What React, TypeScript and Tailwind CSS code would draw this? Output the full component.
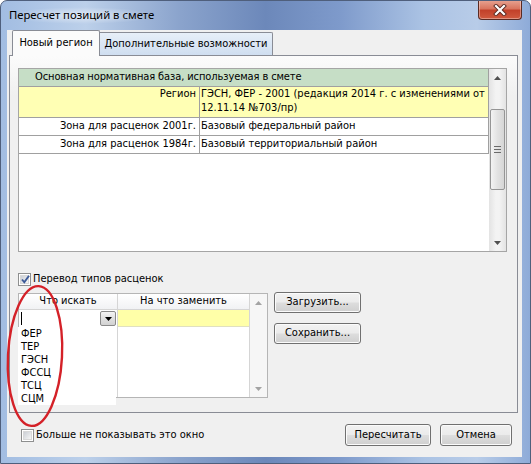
import React from "react";

const UP_ROWS = [
  { label: "Зона для расценок 2001г.", value: "Базовый федеральный район" },
  { label: "Зона для расценок 1984г.", value: "Базовый территориальный район" },
];

const LIST_ITEMS = ["ФЕР", "ТЕР", "ГЭСН", "ФССЦ", "ТСЦ", "СЦМ"];

const Arrow = ({ dir, color }: { dir: "up" | "down"; color: string }) => (
  <svg width="7" height="4" viewBox="0 0 7 4">
    <polygon points={dir === "up" ? "0,4 3.5,0 7,4" : "0,0 7,0 3.5,4"} fill={color} />
  </svg>
);

const Button = ({ label, className }: { label: string; className: string }) => (
  <button
    className={
      "flex items-center justify-center rounded-[3px] border border-[#707070] bg-[linear-gradient(to_bottom,#f2f2f2_0%,#ebebeb_48%,#dddddd_52%,#cfcfcf_100%)] shadow-[inset_0_0_0_1px_#fbfbfb] text-[11px] text-black " +
      className
    }
  >
    {label}
  </button>
);

const Checkbox = ({ checked }: { checked?: boolean }) => (
  <span className="relative flex h-[13px] w-[13px] shrink-0 items-center justify-center border border-[#8e8f8f] bg-white">
    <span className="h-[9px] w-[9px] border border-[#d8d8d8] bg-[linear-gradient(135deg,#cbcfd5,#f6f6f6)]" />
    {checked && (
      <svg className="absolute left-[1px] top-[0px]" width="11" height="11" viewBox="0 0 11 11">
        <path d="M2 5.5 L4.3 8.3 L9 1.8" stroke="#3b5998" strokeWidth="1.9" fill="none" />
      </svg>
    )}
  </span>
);

export default function App() {
  return (
    <div className="relative flex h-[464px] w-[531px] flex-col overflow-hidden rounded-t-[7px] border border-[#4f5f7c] bg-[linear-gradient(to_right,#a2bde2_0%,#bcd0ea_16%,#8aa3cc_34%,#6c88ba_50%,#7e9acb_64%,#abc3e4_80%,#b8cce8_90%,#8eabd8_100%)] pb-[6px] pl-[6px] pr-[8px] font-['DejaVu_Sans_Condensed','DejaVu_Sans',sans-serif] text-[11px] text-black">
      {/* Title bar */}
      <div className="flex h-[29px] items-start justify-between">
        <span className="ml-[1px] mt-[6px] rounded-full bg-[radial-gradient(ellipse_at_center,rgba(255,255,255,0.55),rgba(255,255,255,0)_70%)] px-[1px] font-['Noto_Sans',sans-serif] text-[11.3px] text-black">
          Пересчет позиций в смете
        </span>
        <div className="-mt-[1px] flex h-[20px] w-[44px] items-center justify-center rounded-b-[4px] border border-t-0 border-[#5a2a22] bg-[linear-gradient(to_bottom,#e8a493_0%,#d9755f_45%,#c2412a_55%,#d05a3f_100%)] shadow-[inset_0_0_0_1px_rgba(255,255,255,0.35)]">
          <svg width="14" height="12" viewBox="0 0 14 12">
            <path d="M3 2 L11 10 M11 2 L3 10" stroke="#5b2a22" strokeWidth="4" strokeLinecap="square" />
            <path d="M3 2 L11 10 M11 2 L3 10" stroke="#ffffff" strokeWidth="2.2" strokeLinecap="square" />
          </svg>
        </div>
      </div>

      {/* Client */}
      <div className="flex flex-1 flex-col bg-[#f0f0f0]">
        {/* Tabs */}
        <div className="flex h-[25px] items-end pl-[5px]">
          <div className="relative z-10 -mb-[1px] flex h-[26px] w-[88px] items-center justify-center rounded-t-[2px] border border-b-0 border-[#898c95] bg-[#fbfbfb]">
            Новый регион
          </div>
          <div className="flex h-[23px] w-[173px] items-center justify-center rounded-tr-[2px] border-r border-t border-[#898c95] bg-[linear-gradient(to_bottom,#e7eff8,#cfdef0)]">
            Дополнительные возможности
          </div>
        </div>

        {/* Panel */}
        <div className="ml-[2px] flex h-[358px] w-[509px] flex-col border border-[#898c95] bg-[linear-gradient(to_bottom,#fbfbfb,#f0f0f0_40px)]">
          {/* Upper grid */}
          <div className="ml-[8px] mt-[12px] flex h-[184px] w-[489px] border border-[#a5a5a5] bg-white">
            <div className="flex w-[470px] flex-col">
              <div className="flex h-[18px] items-center border-b border-r border-[#a0a0a0] bg-[#c6dec6] pl-[16px] tracking-[-0.1px]">
                Основная нормативная база, используемая в смете
              </div>
              <div className="flex h-[31px] border-b border-[#a0a0a0] bg-[#ffffb4]">
                <div className="w-[181px] border-r border-[#a0a0a0] pr-[3px] text-right leading-[14px]">Регион</div>
                <div className="flex-1 border-r border-[#a0a0a0] pl-[1px] leading-[14px]">
                  ГЭСН, ФЕР - 2001 (редакция 2014 г. с изменениями от
                  <br />
                  12.11.14 №703/пр)
                </div>
              </div>
              {UP_ROWS.map((r) => (
                <div key={r.label} className="flex h-[18px] border-b border-[#a0a0a0]">
                  <div className="flex w-[181px] items-center justify-end border-r border-[#a0a0a0] pr-[3px]">{r.label}</div>
                  <div className="flex flex-1 items-center border-r border-[#a0a0a0] pl-[1px]">{r.value}</div>
                </div>
              ))}
            </div>
            {/* Scrollbar */}
            <div className="flex w-[17px] flex-col bg-[linear-gradient(to_right,#e3e3e3,#f3f3f3_40%,#f3f3f3_60%,#e3e3e3)]">
              <div className="flex h-[17px] items-center justify-center">
                <Arrow dir="up" color="#505050" />
              </div>
              <div className="h-[23px]" />
              <div className="mx-[1px] flex h-[81px] items-center justify-center rounded-[2px] border border-[#959595] bg-[linear-gradient(to_right,#f3f3f3,#e2e2e2_50%,#d6d6d6)]">
                <svg width="7" height="7" viewBox="0 0 7 7">
                  <path d="M0 0.5 H7 M0 3.5 H7 M0 6.5 H7" stroke="#6a6a6a" strokeWidth="1" />
                </svg>
              </div>
              <div className="flex-1" />
              <div className="flex h-[17px] items-center justify-center">
                <Arrow dir="down" color="#505050" />
              </div>
            </div>
          </div>

          {/* Checkbox */}
          <label className="ml-[8px] mt-[21px] flex h-[13px] items-center gap-[2px]">
            <Checkbox checked />
            <span>Перевод типов расценок</span>
          </label>

          {/* Lower section */}
          <div className="mt-[6px] flex items-start">
            <div className="relative ml-[8px] mt-[1px] flex h-[105px] w-[250px] border border-[#b5b5b5] bg-white">
              <div className="flex w-[99px] flex-col border-r border-[#d5d5d5]">
                <div className="flex h-[16px] items-center justify-center border-b border-[#d5d5d5] bg-[linear-gradient(to_bottom,#ffffff,#f1f2f4)]">
                  Что искать
                </div>
                <div className="flex h-[17px] items-center justify-between bg-white pl-[2px] pr-[1px]">
                  <span className="h-[13px] w-[1px] bg-black" />
                  <span className="flex h-[15px] w-[16px] items-center justify-center rounded-[2px] border border-[#8a8a8a] bg-[linear-gradient(to_bottom,#f4f4f4,#e0e0e0_50%,#d2d2d2)]">
                    <Arrow dir="down" color="#000000" />
                  </span>
                </div>
              </div>
              <div className="flex w-[132px] flex-col border-r border-[#d5d5d5]">
                <div className="flex h-[16px] items-center justify-center border-b border-[#d5d5d5] bg-[linear-gradient(to_bottom,#ffffff,#f1f2f4)]">
                  На что заменить
                </div>
                <div className="h-[17px] border-b border-[#e0e0c0] bg-[#ffffa8]" />
              </div>
              <div className="flex w-[17px] flex-col justify-between bg-[#f6f6f6]">
                <div className="flex h-[17px] items-center justify-center">
                  <Arrow dir="up" color="#a3a3a3" />
                </div>
                <div className="flex h-[17px] items-center justify-center">
                  <Arrow dir="down" color="#a3a3a3" />
                </div>
              </div>

              {/* Open dropdown list */}
              <div className="absolute left-[-1px] top-[33px] flex h-[78px] w-[98px] flex-col bg-white pl-[3px] leading-[13px]">
                {LIST_ITEMS.map((it) => (
                  <span key={it}>{it}</span>
                ))}
              </div>
            </div>

            <div className="ml-[6px] flex flex-col gap-[10px]">
              <Button label="Загрузить..." className="h-[21px] w-[87px]" />
              <Button label="Сохранить..." className="h-[21px] w-[87px]" />
            </div>
          </div>
        </div>

        {/* Bottom row */}
        <div className="mt-[11px] flex h-[22px] items-center pl-[14px] pr-[10px]">
          <Checkbox />
          <span className="ml-[2px]">Больше не показывать это окно</span>
          <div className="flex-1" />
          <Button label="Пересчитать" className="h-[22px] w-[86px]" />
          <Button label="Отмена" className="ml-[9px] h-[22px] w-[72px]" />
        </div>
      </div>

      {/* Red hand-drawn annotation */}
      <svg className="pointer-events-none absolute left-[-1px] top-[-1px]" width="531" height="464" viewBox="0 0 531 464">
        <ellipse cx="35" cy="356" rx="27" ry="70" transform="rotate(3 35 356)" fill="none" stroke="#d42128" strokeWidth="2.4" />
      </svg>
    </div>
  );
}
